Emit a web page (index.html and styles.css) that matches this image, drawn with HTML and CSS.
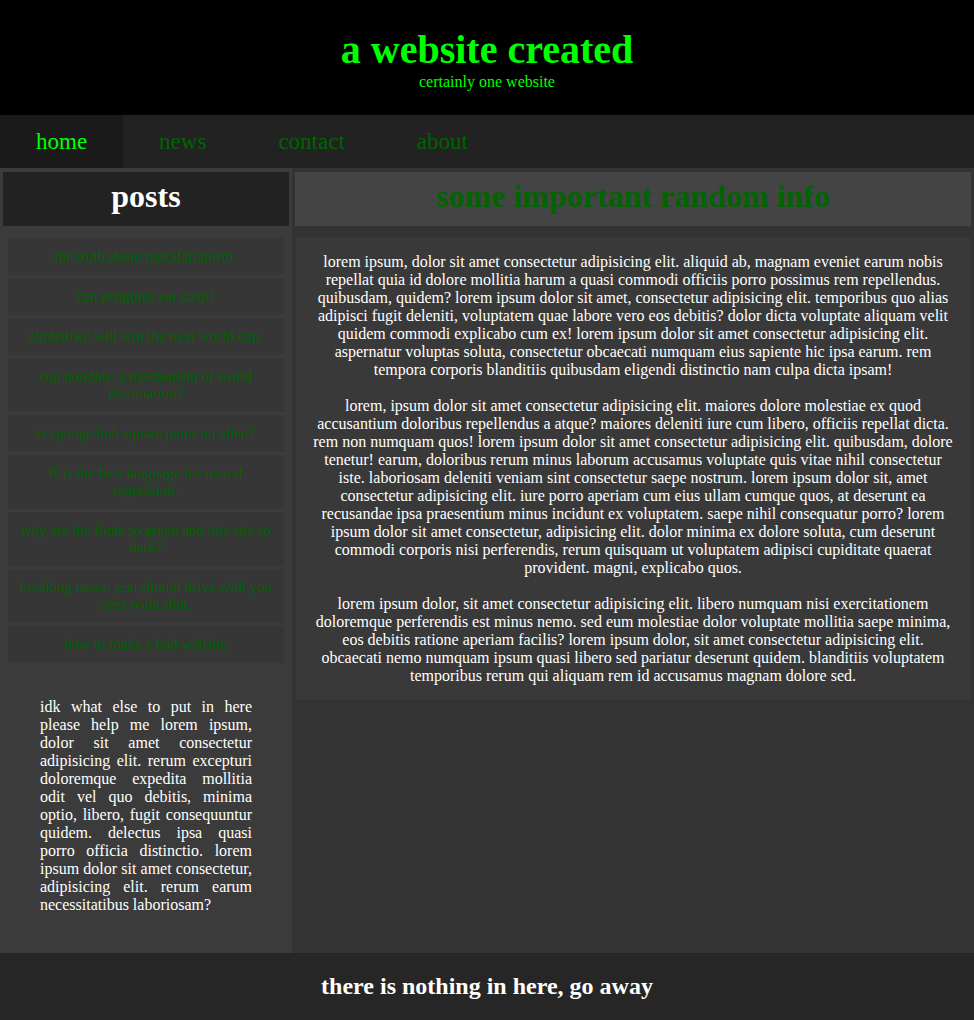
FILE: index.html
```html
<!DOCTYPE html>
<html lang="en">
<head>
<meta charset="utf-8">
<title>a website created</title>
<link rel="stylesheet" href="styles.css">
</head>
<body>
<header class="site-header">
  <h1 class="site-title">a website created</h1>
  <p class="site-subtitle">certainly one website</p>
</header>
<nav class="nav">
  <a class="nav-item active" href="#">home</a>
  <a class="nav-item" href="#">news</a>
  <a class="nav-item" href="#">contact</a>
  <a class="nav-item" href="#">about</a>
</nav>
<div class="layout">
  <aside class="sidebar">
    <h2 class="posts-title">posts</h2>
    <ul class="posts">
      <li class="post">the truth about pastafarianism.</li>
      <li class="post">can penguins eat soup?</li>
      <li class="post">zimbabwe will win the next world cup.</li>
      <li class="post">cup noodles: a mechanism of world domination?</li>
      <li class="post">is sponge bob square pants an alien?</li>
      <li class="post">R is the best language for neural regression.</li>
      <li class="post">why are the fonts so green and this site so dark?</li>
      <li class="post">breaking news: you should drive with you eyes wide shut.</li>
      <li class="post">how to make a bad website</li>
    </ul>
    <p class="side-text">idk what else to put in here please help me lorem ipsum, dolor sit amet consectetur adipisicing elit. rerum excepturi doloremque expedita mollitia odit vel quo debitis, minima optio, libero, fugit consequuntur quidem. delectus ipsa quasi porro officia distinctio. lorem ipsum dolor sit amet consectetur, adipisicing elit. rerum earum necessitatibus laboriosam?</p>
  </aside>
  <main class="main">
    <h2 class="info-title">some important random info</h2>
    <section class="content">
      <p>lorem ipsum, dolor sit amet consectetur adipisicing elit. aliquid ab, magnam eveniet earum nobis repellat quia id dolore mollitia harum a quasi commodi officiis porro possimus rem repellendus. quibusdam, quidem? lorem ipsum dolor sit amet, consectetur adipisicing elit. temporibus quo alias adipisci fugit deleniti, voluptatem quae labore vero eos debitis? dolor dicta voluptate aliquam velit quidem commodi explicabo cum ex! lorem ipsum dolor sit amet consectetur adipisicing elit. aspernatur voluptas soluta, consectetur obcaecati numquam eius sapiente hic ipsa earum. rem tempora corporis blanditiis quibusdam eligendi distinctio nam culpa dicta ipsam!</p>
      <p>lorem, ipsum dolor sit amet consectetur adipisicing elit. maiores dolore molestiae ex quod accusantium doloribus repellendus a atque? maiores deleniti iure cum libero, officiis repellat dicta. rem non numquam quos! lorem ipsum dolor sit amet consectetur adipisicing elit. quibusdam, dolore tenetur! earum, doloribus rerum minus laborum accusamus voluptate quis vitae nihil consectetur iste. laboriosam deleniti veniam sint consectetur saepe nostrum. lorem ipsum dolor sit, amet consectetur adipisicing elit. iure porro aperiam cum eius ullam cumque quos, at deserunt ea recusandae ipsa praesentium minus incidunt ex voluptatem. saepe nihil consequatur porro? lorem ipsum dolor sit amet consectetur, adipisicing elit. dolor minima ex dolore soluta, cum deserunt commodi corporis nisi perferendis, rerum quisquam ut voluptatem adipisci cupiditate quaerat provident. magni, explicabo quos.</p>
      <p>lorem ipsum dolor, sit amet consectetur adipisicing elit. libero numquam nisi exercitationem doloremque perferendis est minus nemo. sed eum molestiae dolor voluptate mollitia saepe minima, eos debitis ratione aperiam facilis? lorem ipsum dolor, sit amet consectetur adipisicing elit. obcaecati nemo numquam ipsum quasi libero sed pariatur deserunt quidem. blanditiis voluptatem temporibus rerum qui aliquam rem id accusamus magnam dolore sed.</p>
    </section>
  </main>
</div>
<footer class="footer">
  <h2 class="footer-text">there is nothing in here, go away</h2>
</footer>
</body>
</html>
```

FILE: styles.css
```css
* {
  box-sizing: border-box;
}

body {
  margin: 0;
  font-family: "Liberation Serif", "Times New Roman", serif;
  background: #333333;
  color: #ffffff;
}

.site-header {
  background: #000000;
  text-align: center;
  padding: 27px 0 24px;
}

.site-title {
  margin: 0;
  font-size: 40px;
  line-height: 46px;
  font-weight: bold;
  color: #00ff00;
}

.site-subtitle {
  margin: 0;
  font-size: 16px;
  line-height: 18px;
  color: #00ff00;
}

.nav {
  display: flex;
  background: #222222;
  height: 53px;
}

.nav-item {
  display: block;
  padding: 0 36px;
  font-size: 23px;
  line-height: 53px;
  color: #006400;
  text-decoration: none;
}

.nav-item.active {
  background: #1a1a1a;
  color: #00ff00;
}

.layout {
  display: grid;
  grid-template-columns: 292px 1fr;
}

.sidebar {
  background: #3b3b3b;
  padding: 4px 0 39px;
}

.posts-title {
  margin: 0 3px;
  height: 54px;
  padding-bottom: 5px;
  background: #222222;
  color: #ffffff;
  font-size: 32px;
  line-height: 49px;
  text-align: center;
}

.posts {
  list-style: none;
  margin: 12px 8px 0;
  padding: 0;
  display: flex;
  flex-direction: column;
  gap: 3px;
}

.post {
  background: #363636;
  color: #006400;
  font-size: 15px;
  line-height: 17px;
  padding: 10px 8px;
  text-align: center;
}

.side-text {
  margin: 35px 0 0;
  padding: 0 40px;
  font-size: 16px;
  line-height: 18px;
  text-align: justify;
  color: #ffffff;
}

.main {
  background: #333333;
  padding-top: 4px;
}

.info-title {
  margin: 0 3px;
  height: 54px;
  padding-bottom: 5px;
  background: #444444;
  color: #006400;
  font-size: 32px;
  line-height: 49px;
  text-align: center;
}

.content {
  margin: 12px 4px 0;
  background: #393939;
  padding: 15px 16px;
  text-align: center;
  font-size: 16px;
  line-height: 18px;
}

.content p {
  margin: 0 0 18px;
}

.content p:last-child {
  margin-bottom: 0;
}

.footer {
  background: #262626;
  height: 67px;
}

.footer-text {
  margin: 0;
  font-size: 24px;
  line-height: 67px;
  text-align: center;
  color: #ffffff;
}
```
